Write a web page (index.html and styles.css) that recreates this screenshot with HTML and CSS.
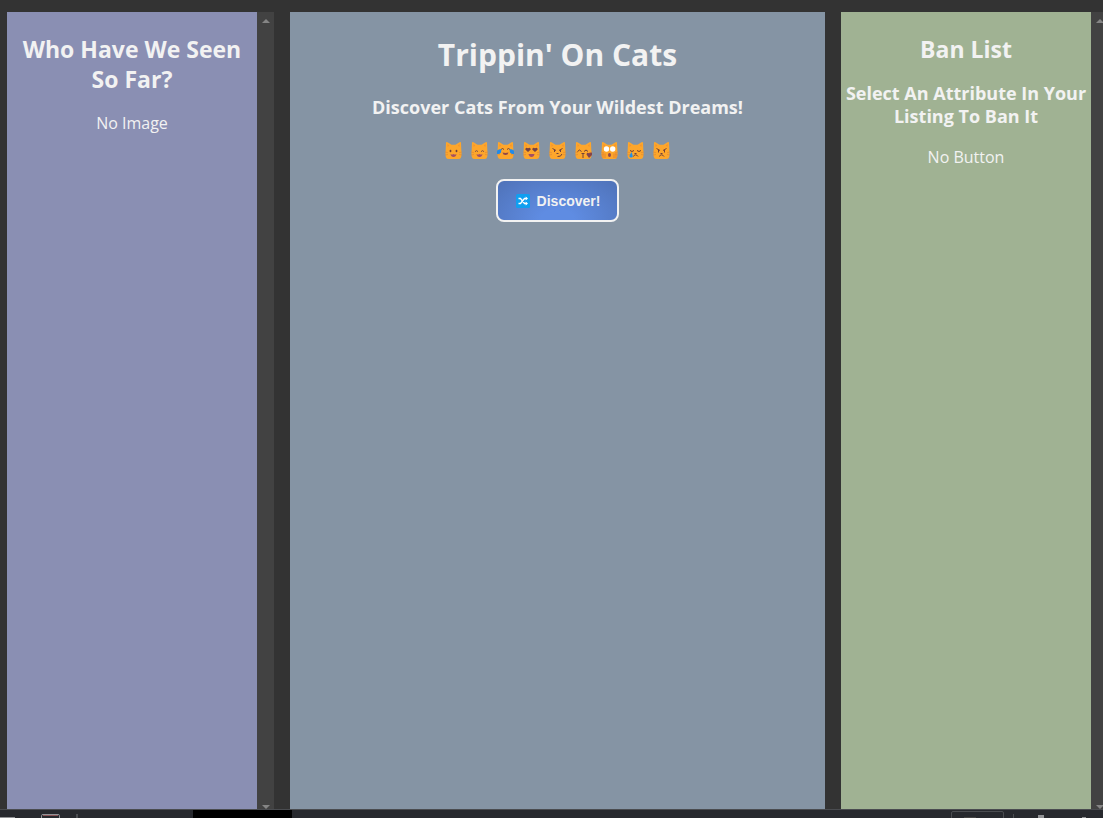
FILE: index.html
```
<!DOCTYPE html>
<html lang="en">
<head>
<meta charset="utf-8">
<title>Trippin' On Cats</title>
<link rel="stylesheet" href="styles.css">
</head>
<body>
<svg class="defs" aria-hidden="true">
  <symbol id="cat" viewBox="0 0 17 17">
    <path fill="#fda62b" d="M1 .4Q1.500 -.2 2.500.3L6.500 2.700H10.500L14.500.3Q15.500 -.2 16 .4L16.300 8Q16.800 13 16 15.500Q15.500 17 13 17H4Q1.500 17 1 15.500Q.2 13 .7 8Z"/>
    <path fill="#f5942d" d="M2.300 2L4.300 3.500L2.500 5ZM14.700 2L12.700 3.500L14.500 5Z"/>
    <path stroke="#e08a35" stroke-width=".7" d="M0 10L3 10.700M0 13L3 12.500M17 10L14 10.700M17 13L14 12.500"/>
  </symbol>
</svg>
<main class="board">
  <section class="panel panel-seen">
    <div class="content">
      <h2>Who Have We Seen So Far?</h2>
      <p>No Image</p>
    </div>
    <div class="track" aria-hidden="true"><i class="up"></i><i class="down"></i></div>
  </section>
  <section class="panel panel-main">
    <div class="content">
      <h1>Trippin' On Cats</h1>
      <h3>Discover Cats From Your Wildest Dreams!</h3>
      <div class="cats" role="img" aria-label="Nine cat faces">
        <svg viewBox="0 0 17 17"><use href="#cat"/><g fill="#704038"><ellipse cx="5.500" cy="9" rx=".9" ry="1.300"/><ellipse cx="11.500" cy="9" rx=".9" ry="1.300"/></g><path fill="#a44f62" d="M5.500 12Q7 13 8.500 12Q10 13 11.500 12Q11 15 8.500 15T5.500 12Z"/></svg>
        <svg viewBox="0 0 17 17"><use href="#cat"/><path fill="none" stroke="#805048" d="M4 9.700Q5.500 7.500 7 9.700M10 9.700Q11.500 7.500 13 9.700"/><path fill="#a44f62" d="M5.500 12Q7 13 8.500 12Q10 13 11.500 12Q11 15 8.500 15T5.500 12Z"/></svg>
        <svg viewBox="0 0 17 17"><use href="#cat"/><path fill="none" stroke="#704038" d="M4 7.500Q5.500 5.500 7 7.500M10 7.500Q11.500 5.500 13 7.500"/><path fill="#914848" d="M5.500 10.500Q8.500 11.300 11.500 10.500Q11 13 8.500 13T5.500 10.500Z"/><path fill="#218ae9" d="M4.500 7L4 10.500Q2 13 -1 11.500Q-1 7.500 4.500 7ZM12.500 7L13 10.500Q15 13 18 11.500Q18 7.500 12.500 7Z"/></svg>
        <svg viewBox="0 0 17 17"><use href="#cat"/><path fill="#744244" d="M5 10L2.300 7.500Q2.500 5 5 6.300Q7.500 4.800 7.800 7.500ZM12 10L9.200 7.500Q9.500 5 12 6.300Q14.500 4.800 14.700 7.500Z"/><path fill="#a44f62" d="M5.500 12H11.500Q11 15 8.500 15T5.500 12Z"/></svg>
        <svg viewBox="0 0 17 17"><use href="#cat"/><path fill="none" stroke="#704038" d="M3.500 6.500L7 8.500M13.500 6.500L10 8.500M5.500 8V10M11.500 8V10M7.500 11.500H9.500M8.500 14.500Q12 15 13 12"/></svg>
        <svg viewBox="0 0 17 17"><use href="#cat"/><path fill="none" stroke="#704038" d="M2.500 9.500Q4.500 6.500 6.500 9.500M9 9.500Q11 6.500 13 9.500M8 11V16M6.500 11.500H9.500"/><path fill="#84444a" d="M14 16L11.500 12.500Q11.700 10 14 11.300Q17.500 9.300 17.600 12.500Z"/></svg>
        <svg viewBox="0 0 17 17"><use href="#cat"/><g fill="#fff"><circle cx="5.500" cy="7" r="2.700"/><circle cx="11.700" cy="7" r="2.700"/></g><ellipse cx="8.500" cy="13" rx="1.500" ry="2" fill="#914848"/><path fill="none" stroke="#e7852d" d="M2 11V16M4 11.500V16M13 11.500V16M15 11V16"/></svg>
        <svg viewBox="0 0 17 17"><use href="#cat"/><path fill="none" stroke="#704038" d="M3 8.500Q5 10.500 7 8.500M10 8.500Q12 10.500 14 8.500M7.500 11.500H9.500M6.500 14.500Q7 12.800 8.500 12.800T11 14.500"/><path fill="#238fe6" d="M4.500 10Q7 15.500 4.500 15.500T2.500 13.500Z"/></svg>
        <svg viewBox="0 0 17 17"><use href="#cat"/><path fill="none" stroke="#704038" d="M3.500 6.500L7 8.500M13.500 6.500L10 8.500M5.500 8V10.500M11.500 8V10.500M7.500 11.500H9.500M6.500 14.500Q7 12.800 8.500 12.800T11 14.500"/></svg>
      </div>
      <button class="discover" type="button">
        <svg viewBox="0 0 14 14" aria-hidden="true"><rect width="14" height="14" rx="1.500" fill="#109ff0"/><path fill="none" stroke="#fff" stroke-width="1.300" d="M2.500 4.500H4.500L8.500 9.500H10.500M2.500 9.500H4.500L8.500 4.500H10.500"/><path fill="#fff" d="M9.700 2.500L12 4.500L9.700 6.500ZM9.700 7.500L12 9.500L9.700 11.500Z"/></svg>
        <span>Discover!</span>
      </button>
    </div>
  </section>
  <section class="panel panel-ban">
    <div class="content">
      <h2>Ban List</h2>
      <h3>Select An Attribute In Your Listing To Ban It</h3>
      <p>No Button</p>
    </div>
    <div class="track" aria-hidden="true"><i class="up"></i><i class="down"></i></div>
  </section>
</main>
<footer class="strip" aria-hidden="true">
  <svg width="292" height="8" viewBox="0 0 292 8"><path fill="#000" d="M193 0H292V8H193Z"/><path fill="#929396" d="M0 7H15V8H0Z"/><path fill="none" stroke="#929396" d="M41.500 8V5.500Q41.500 4.500 43 4.500H58Q59.500 4.500 59.500 5.500V8"/><path stroke="#8a5558" d="M43 5.500H58"/><path stroke="#4b4d51" stroke-width="2" d="M77 4V8"/></svg>
  <svg width="153" height="8" viewBox="0 0 153 8"><path fill="none" stroke="#4b4d51" d="M1.500 8V3Q1.500 1.500 3 1.500H52Q53.500 1.500 53.500 3V8M63.500 4V8"/><path fill="#454545" d="M14 7H26V8H14Z"/><path fill="#929396" d="M88 5H94V8H88ZM132 7H136V8H132Z"/></svg>
</footer>
</body>
</html>
```
FILE: styles.css
```
* {
  box-sizing: border-box;
}

body {
  display: flex;
  flex-direction: column;
  height: 100vh;
  margin: 0;
  overflow: hidden;
  background: #333;
  color: #f2f2f2;
  font-family: "Segoe UI", "Open Sans", "Noto Sans", sans-serif;
  font-size: 16px;
  line-height: 22px;
  text-align: center;
}

.defs {
  display: none;
}

.board {
  display: grid;
  flex: 1;
  grid-template-columns: 267px 1fr 267px;
  gap: 16px;
  margin-right: -5px;
  padding: 12px 0 0 7px;
}

.panel {
  display: flex;
}

.content {
  flex: 1;
  padding: 22px 3px 0;
}

.panel-seen .content {
  background: #8a8fb3;
}

.panel-main .content {
  background: #8594a4;
}

.panel-ban .content {
  background: #a0b293;
}

h1,
h2,
h3,
p {
  margin: 0;
}

h1 {
  margin-bottom: 20px;
  font-size: 30px;
  line-height: 42px;
}

h2 {
  margin-bottom: 18px;
  font-size: 23px;
  line-height: 30px;
}

h3 {
  margin-bottom: 18px;
  font-size: 18px;
  line-height: 23px;
}

.track {
  display: flex;
  flex-direction: column;
  align-items: center;
  justify-content: space-between;
  width: 17px;
  padding: 7px 0 0;
  background: #424242;
}

.up,
.down {
  border: 4px solid transparent;
}

.up {
  border-top: 0;
  border-bottom-color: #858585;
}

.down {
  border-bottom: 0;
  border-top-color: #858585;
}

.cats {
  display: flex;
  justify-content: center;
  gap: 9px;
  padding-top: 5px;
  margin-bottom: 20px;
}

.cats svg {
  width: 17px;
  height: 17px;
}

.discover {
  display: inline-flex;
  align-items: center;
  gap: 7px;
  padding: 12px 17px 11px 18px;
  border: 2px solid #f2f2f2;
  border-radius: 8px;
  background: radial-gradient(ellipse at 50% 100%, #5f8ce2 20%, #4f72b8 100%);
  color: #f2f2f2;
  font: bold 14px/16px "Liberation Sans", Arial, sans-serif;
}

.discover svg {
  width: 14px;
  height: 14px;
}

.strip {
  display: flex;
  justify-content: space-between;
  border-top: 1px solid #4a4c50;
  background: #27292e;
}

.strip svg {
  display: block;
}
```
